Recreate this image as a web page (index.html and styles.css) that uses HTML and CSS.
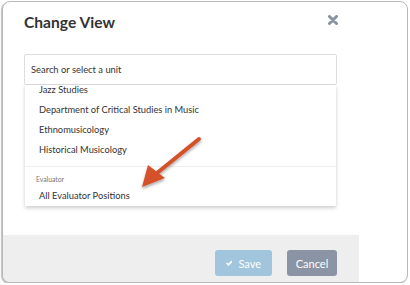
FILE: index.html
```html
<!DOCTYPE html>
<html lang="en">
<head>
  <meta charset="UTF-8" />
  <title>Change View</title>
  <link rel="stylesheet" href="styles.css">
</head>
<body>

  <div class="modal">
    <div class="modal-header">
      <h3>Change View</h3>
      <svg class="close" width="10" height="10" viewBox="0 0 10 10">
        <path d="M1.5 1.5 L8.5 8.5 M8.5 1.5 L1.5 8.5" stroke="#8a93a3" stroke-width="3" stroke-linecap="round"/>
      </svg>
    </div>

    <div class="modal-body">
      <div class="search">Search or select a unit</div>
      <div class="dropdown">
        <ul class="options">
          <li>Jazz Studies</li>
          <li>Department of Critical Studies in Music</li>
          <li>Ethnomusicology</li>
          <li>Historical Musicology</li>
        </ul>
        <div class="group">
          <div class="group-label">Evaluator</div>
          <ul class="options">
            <li>All Evaluator Positions</li>
          </ul>
        </div>
      </div>
    </div>

    <div class="modal-footer">
      <button class="btn save-btn">
        <svg width="10" height="8" viewBox="0 0 10 8">
          <path d="M0.8 4 L3.8 6.8 L9.3 1" fill="none" stroke="#fff" stroke-width="2.4"/>
        </svg>
        Save
      </button>
      <button class="btn cancel-btn">Cancel</button>
    </div>
  </div>

  <svg class="arrow" width="410" height="285" viewBox="0 0 410 285">
    <defs>
      <filter id="shadow" x="-20%" y="-20%" width="140%" height="140%">
        <feDropShadow dx="0" dy="2" stdDeviation="1.5" flood-color="#000" flood-opacity="0.35"/>
      </filter>
    </defs>
    <g filter="url(#shadow)" fill="#d4512b">
      <path d="M199 139 L157 173" stroke="#d4512b" stroke-width="4" stroke-linecap="round"/>
      <polygon points="142,187 148,165 165,178"/>
    </g>
  </svg>

</body>
</html>
```

FILE: styles.css
```css
body {
  margin: 0;
  font-family: Lato, 'Liberation Sans', sans-serif;
  background: white;
  color: #333;
}

.modal {
  margin: 1px 2px 0 2px;
  height: 280px;
  border: 1px solid #b9b9b9;
  border-radius: 8px;
  background: white;
  display: flex;
  flex-direction: column;
  overflow: hidden;
  box-shadow: -1px 1px 1px rgba(0, 0, 0, 0.25);
}

.modal-header {
  display: flex;
  justify-content: space-between;
  align-items: flex-start;
  padding: 11px 69px 0 21px;
}

.modal-header h3 {
  margin: 0;
  font-size: 15.6px;
  font-weight: 700;
  color: #333;
}

.close {
  margin-top: 2px;
}

.modal-body {
  padding: 23px 70px 0 21px;
  flex: 1;
}

.search {
  height: 29px;
  border: 1px solid #ddd;
  border-radius: 2px;
  padding: 0 6px;
  font-size: 9.4px;
  line-height: 29px;
  color: #333;
}

.dropdown {
  margin: 0 1px;
  height: 121px;
  overflow: hidden;
  background: white;
  box-shadow: 0 2px 4px rgba(0, 0, 0, 0.2);
}

.options {
  list-style: none;
  margin: 0;
  padding: 0;
}

.dropdown > .options {
  margin-top: -5px;
  padding-bottom: 6px;
  border-bottom: 1px solid #eee;
}

.options li {
  height: 20px;
  line-height: 20px;
  padding-left: 14px;
  font-size: 9.3px;
  color: #333;
}

.group-label {
  height: 14px;
  padding: 5px 0 0 11px;
  font-size: 6.8px;
  line-height: 14px;
  color: #777;
}

.modal-footer {
  width: 356px;
  height: 47px;
  background: #eee;
  display: flex;
  justify-content: flex-end;
  align-items: flex-start;
  gap: 15px;
  padding: 15px 22px 0 0;
  box-sizing: border-box;
}

.btn {
  height: 26px;
  border: none;
  border-radius: 3px;
  color: white;
  font-family: Lato, 'Liberation Sans', sans-serif;
  font-size: 11px;
  padding: 0 11px;
  display: flex;
  align-items: center;
  gap: 6px;
}

.save-btn {
  width: 57px;
  background: #a0c5dc;
}

.cancel-btn {
  width: 50px;
  background: #8b94a5;
  justify-content: center;
}

.arrow {
  position: absolute;
  top: 0;
  left: 0;
  pointer-events: none;
}
```
